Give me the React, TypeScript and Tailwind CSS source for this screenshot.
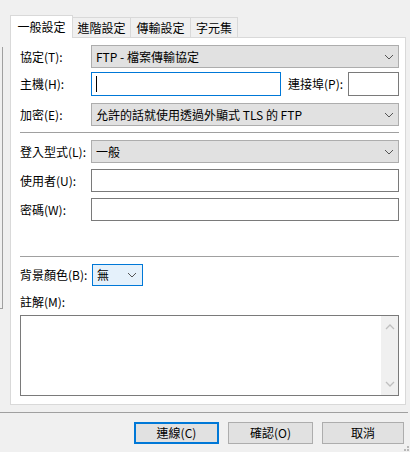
import React from "react";

const FONT = { fontFamily: '"Noto Sans CJK TC", "Noto Sans", sans-serif' };

function Chevron({ color = "#555" }: { color?: string }) {
  return (
    <svg width="10" height="6" viewBox="0 0 10 6" className="shrink-0">
      <polyline points="1,1 5,5 9,1" fill="none" stroke={color} strokeWidth="1" />
    </svg>
  );
}

function Combo({ text }: { text: string }) {
  return (
    <div className="flex-1 h-full flex items-center justify-between bg-[#e1e1e1] border border-[#adadad] pl-[4px] pr-[4px]">
      <span className="text-[12px] leading-[16px] text-black whitespace-nowrap">{text}</span>
      <Chevron />
    </div>
  );
}

function Label({ text, w }: { text: string; w: string }) {
  return <div className={`${w} shrink-0 text-[12px] leading-[16px] text-black whitespace-nowrap`}>{text}</div>;
}

export default function App() {
  return (
    <div className="w-[410px] h-[452px] bg-[#f0f0f0] flex flex-col relative overflow-hidden" style={FONT}>
      <div className="flex items-start">
        <div className="w-[10px] shrink-0">
          <div className="mt-[47px] w-[3px] h-[262px] border-r border-b border-[#a0a0a0]" />
        </div>
        <div className="w-[396px] pt-[15px] flex flex-col">
          <div className="h-[22px] flex items-end">
            <div className="relative z-10 -mb-px w-[63px] h-[23px] bg-white border border-b-0 border-[#d9d9d9] flex items-center justify-center text-[12px] leading-[16px] text-black">
              一般設定
            </div>
            <div className="w-[58px] h-[20px] border-t border-r border-[#d9d9d9] flex items-center justify-center text-[12px] leading-[16px] text-black">
              進階設定
            </div>
            <div className="w-[60px] h-[20px] border-t border-r border-[#d9d9d9] flex items-center justify-center text-[12px] leading-[16px] text-black">
              傳輸設定
            </div>
            <div className="w-[47px] h-[20px] border-t border-r border-[#d9d9d9] flex items-center justify-center text-[12px] leading-[16px] text-black">
              字元集
            </div>
          </div>
          <div className="h-[368px] bg-white border border-[#d9d9d9] pl-[9px] pr-[6px] pt-[7px] flex flex-col">
            <div className="h-[23px] flex items-center">
              <Label text="協定(T):" w="w-[71px]" />
              <Combo text="FTP - 檔案傳輸協定" />
            </div>
            <div className="mt-[4px] h-[24px] flex items-center">
              <Label text="主機(H):" w="w-[71px]" />
              <div className="w-[190px] h-full border border-[#0078d7] bg-white flex items-center pl-[4px]">
                <div className="w-px h-[16px] bg-black" />
              </div>
              <div className="ml-[7px] w-[60px] shrink-0 text-[12px] leading-[16px] text-black whitespace-nowrap">連接埠(P):</div>
              <div className="flex-1 h-full border border-[#7a7a7a] bg-white" />
            </div>
            <div className="mt-[7px] h-[23px] flex items-center">
              <Label text="加密(E):" w="w-[71px]" />
              <Combo text="允許的話就使用透過外顯式 TLS 的 FTP" />
            </div>
            <div className="mt-[6px] h-px bg-[#a0a0a0]" />
            <div className="mt-[7px] h-[23px] flex items-center">
              <Label text="登入型式(L):" w="w-[71px]" />
              <Combo text="一般" />
            </div>
            <div className="mt-[6px] h-[23px] flex items-center">
              <Label text="使用者(U):" w="w-[71px]" />
              <div className="flex-1 h-full border border-[#7a7a7a] bg-white" />
            </div>
            <div className="mt-[6px] h-[23px] flex items-center">
              <Label text="密碼(W):" w="w-[71px]" />
              <div className="flex-1 h-full border border-[#7a7a7a] bg-white" />
            </div>
            <div className="mt-[35px] h-px bg-[#a0a0a0]" />
            <div className="mt-[7px] h-[22px] flex items-center">
              <Label text="背景顏色(B):" w="w-[72px]" />
              <div className="w-[51px] h-full border border-[#0078d7] bg-[#e5f1fb] flex items-center justify-between pl-[4px] pr-[5px]">
                <span className="text-[12px] leading-[16px] text-black">無</span>
                <Chevron />
              </div>
            </div>
            <div className="mt-[8px] text-[12px] leading-[16px] text-black">註解(M):</div>
            <div className="mt-[5px] h-[81px] border border-[#7a7a7a] bg-white flex justify-end">
              <div className="w-[17px] h-full bg-[#f0f0f0] flex flex-col items-center justify-between py-[8px]">
                <svg width="10" height="6" viewBox="0 0 10 6">
                  <polyline points="1,5 5,1 9,5" fill="none" stroke="#bfbfbf" strokeWidth="1.3" />
                </svg>
                <svg width="10" height="6" viewBox="0 0 10 6">
                  <polyline points="1,1 5,5 9,1" fill="none" stroke="#bfbfbf" strokeWidth="1.3" />
                </svg>
              </div>
            </div>
          </div>
        </div>
      </div>
      <div className="mt-[7px] w-[408px] h-px bg-[#a0a0a0]" />
      <div className="mt-[9px] h-[22px] flex pl-[134px] gap-[9px]">
        <div className="w-[85px] h-full border-2 border-[#0078d7] bg-[#e1e1e1] flex items-center justify-center text-[12px] leading-[16px] text-black">
          連線(C)
        </div>
        <div className="w-[85px] h-full border border-[#adadad] bg-[#e1e1e1] flex items-center justify-center text-[12px] leading-[16px] text-black">
          確認(O)
        </div>
        <div className="w-[82px] h-full border border-[#adadad] bg-[#e1e1e1] flex items-center justify-center text-[12px] leading-[16px] text-black">
          取消
        </div>
      </div>
      <div className="absolute right-[1px] bottom-[1px] w-[6px] h-[6px]">
        <div className="absolute right-0 bottom-0 w-[2px] h-[2px] bg-[#b8b8b8]" />
        <div className="absolute right-[3px] bottom-0 w-[2px] h-[2px] bg-[#b8b8b8]" />
        <div className="absolute right-0 bottom-[3px] w-[2px] h-[2px] bg-[#b8b8b8]" />
      </div>
    </div>
  );
}
